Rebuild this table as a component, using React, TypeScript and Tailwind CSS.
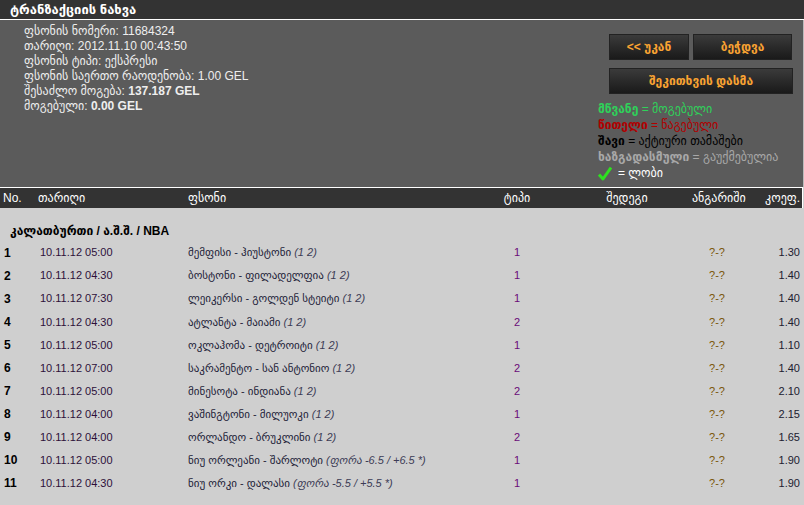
import type { ReactNode } from "react";

interface Bet {
    no: number,
    date: string,
    match: string,
    pick: string,
    type: string,
    odds: string,
}

const bets: Bet[] = [
    { no: 1, date: "10.11.12 05:00", match: "მემფისი - ჰიუსტონი", pick: "(1 2)", type: "1", odds: "1.30" },
    { no: 2, date: "10.11.12 04:30", match: "ბოსტონი - ფილადელფია", pick: "(1 2)", type: "1", odds: "1.40" },
    { no: 3, date: "10.11.12 07:30", match: "ლეიკერსი - გოლდენ სტეიტი", pick: "(1 2)", type: "1", odds: "1.40" },
    { no: 4, date: "10.11.12 04:30", match: "ატლანტა - მაიამი", pick: "(1 2)", type: "2", odds: "1.40" },
    { no: 5, date: "10.11.12 05:00", match: "ოკლაჰომა - დეტროიტი", pick: "(1 2)", type: "1", odds: "1.10" },
    { no: 6, date: "10.11.12 07:00", match: "საკრამენტო - სან ანტონიო", pick: "(1 2)", type: "2", odds: "1.40" },
    { no: 7, date: "10.11.12 05:00", match: "მინესოტა - ინდიანა", pick: "(1 2)", type: "2", odds: "2.10" },
    { no: 8, date: "10.11.12 04:00", match: "ვაშინგტონი - მილუოკი", pick: "(1 2)", type: "1", odds: "2.15" },
    { no: 9, date: "10.11.12 04:00", match: "ორლანდო - ბრუკლინი", pick: "(1 2)", type: "2", odds: "1.65" },
    { no: 10, date: "10.11.12 05:00", match: "ნიუ ორლეანი - შარლოტი", pick: "(ფორა -6.5 / +6.5 *)", type: "1", odds: "1.90" },
    { no: 11, date: "10.11.12 04:30", match: "ნიუ ორკი - დალასი", pick: "(ფორა -5.5 / +5.5 *)", type: "1", odds: "1.90" },
];

const InfoLine = ({ label, children }: { label: string, children: ReactNode }) => (
    <div className="h-[15px] leading-[15px]">
        {label}: {children}
    </div>
)

const ActionButton = ({ children, className }: { children: ReactNode, className: string }) => (
    <button className={`${className} h-[26px] bg-linear-to-b from-[#3b3b3b] to-[#1a1a1a] border border-[#222] text-[#f9a332] text-xs font-bold`}>
        {children}
    </button>
)

const App = () => {
    return (
        <div className="w-[804px] h-[505px] overflow-hidden bg-[#cfcfcf] text-xs font-['Liberation_Sans','DejaVu_Sans',sans-serif]">
            <div className="h-[20px] bg-[#333] border-b border-white px-[10px] text-white font-bold text-[13px] leading-[20px]">
                ტრანზაქციის ნახვა
            </div>

            <div className="h-[167px] bg-[#5b5b5b] border-r border-[#bbb] flex">
                <div className="flex-1 pl-[24px] pt-[4px] text-[#eee]">
                    <InfoLine label="ფსონის ნომერი">11684324</InfoLine>
                    <InfoLine label="თარიღი">2012.11.10 00:43:50</InfoLine>
                    <InfoLine label="ფსონის ტიპი">ექსპრესი</InfoLine>
                    <InfoLine label="ფსონის საერთო რაოდენობა">1.00 GEL</InfoLine>
                    <InfoLine label="შესაძლო მოგება"><b>137.187 GEL</b></InfoLine>
                    <InfoLine label="მოგებული"><b>0.00 GEL</b></InfoLine>
                </div>
                <div className="w-[206px] pt-[14px]">
                    <div className="flex gap-[4px] pl-[12px]">
                        <ActionButton className="w-[80px]">&lt;&lt; უკან</ActionButton>
                        <ActionButton className="w-[99px]">ბეჭდვა</ActionButton>
                    </div>
                    <div className="pl-[12px] mt-[8px]">
                        <ActionButton className="w-[184px]">შეკითხვის დასმა</ActionButton>
                    </div>
                    <div className="mt-[7px] pl-[1px] text-xs leading-[16px]">
                        <div className="text-[#2fd15a]"><b>მწვანე</b> = მოგებული</div>
                        <div className="text-[#b00000]"><b>წითელი</b> = წაგებული</div>
                        <div className="text-black"><b>შავი</b> = აქტიური თამაშები</div>
                        <div className="text-[#a8a8a8]"><b>ხაზგადასმული</b> = გაუქმებულია</div>
                        <div className="text-white flex items-center gap-[6px]">
                            <svg width="14" height="15" viewBox="0 0 14 15">
                                <path d="M1 8.5 L5 13 L13 1.5" fill="none" stroke="#2ee020" strokeWidth="3" strokeLinejoin="round" />
                            </svg>
                            <span>= ლობი</span>
                        </div>
                    </div>
                </div>
            </div>

            <div className="h-[21px] w-[803px] bg-[#333] border-t border-r border-white flex items-center text-white text-xs">
                <div className="w-[35px] pl-[3px]">No.</div>
                <div className="w-[150px] pl-[3px]">თარიღი</div>
                <div className="w-[287px] pl-[3px]">ფსონი</div>
                <div className="w-[90px] text-center">ტიპი</div>
                <div className="w-[130px] text-center">შედეგი</div>
                <div className="w-[50px] text-center">ანგარიში</div>
                <div className="w-[58px] text-right">კოეფ.</div>
            </div>

            <div className="h-[33px] pl-[10px] pt-[15px] font-bold text-xs leading-[16px] text-black">
                კალათბურთი / ა.შ.შ. / NBA
            </div>

            {bets.map((bet) => (
                <div key={bet.no} className="h-[23.1px] flex items-center text-[11px]">
                    <div className="w-[35px] pl-[4px] font-bold text-xs text-black">{bet.no}</div>
                    <div className="w-[150px] pl-[5px] text-[#2d0f3a]">{bet.date}</div>
                    <div className="w-[287px] pl-[3px] text-[#222238]">
                        {bet.match} <i className="text-[#3c3c55]">{bet.pick}</i>
                    </div>
                    <div className="w-[90px] text-center text-[#6a0a78]">{bet.type}</div>
                    <div className="w-[130px]"></div>
                    <div className="w-[50px] text-center text-[#7a5508]">?-?</div>
                    <div className="w-[58px] text-right text-[#202030]">{bet.odds}</div>
                </div>
            ))}
        </div>
    )
}

export default App;
